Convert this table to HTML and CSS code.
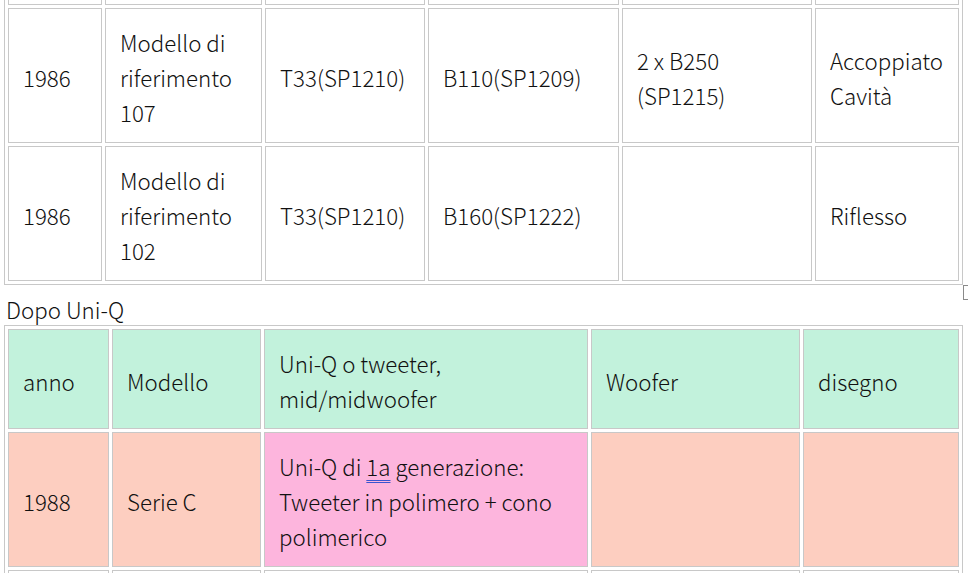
FILE: index.html
```html
<!DOCTYPE html>
<html lang="it">
<head>
<meta charset="utf-8">
<title>Uni-Q</title>
<link rel="stylesheet" href="styles.css">
</head>
<body>
<div class="page">
  <table class="grid grid-before">
    <colgroup>
      <col class="b1"><col class="b2"><col class="b3"><col class="b4"><col class="b5"><col class="b6">
    </colgroup>
    <tr class="row-head">
      <td>anno</td><td>Modello</td><td>Tweeter</td><td>Midrange / Woofer</td><td>Radiatore</td><td>disegno</td>
    </tr>
    <tr>
      <td>1986</td>
      <td>Modello di riferimento 107</td>
      <td>T33(SP1210)</td>
      <td>B110(SP1209)</td>
      <td>2 x B250<br>(SP1215)</td>
      <td>Accoppiato Cavità</td>
    </tr>
    <tr>
      <td>1986</td>
      <td>Modello di riferimento 102</td>
      <td>T33(SP1210)</td>
      <td>B160(SP1222)</td>
      <td></td>
      <td>Riflesso</td>
    </tr>
  </table>
  <div class="caption-line">Dopo Uni-Q</div>
  <table class="grid grid-after">
    <colgroup>
      <col class="a1"><col class="a2"><col class="a3"><col class="a4"><col class="a5">
    </colgroup>
    <tr class="row-green">
      <td>anno</td>
      <td>Modello</td>
      <td>Uni-Q o tweeter, mid/midwoofer</td>
      <td>Woofer</td>
      <td>disegno</td>
    </tr>
    <tr class="row-peach">
      <td>1988</td>
      <td>Serie C</td>
      <td class="pink">Uni-Q di <span class="mark">1a</span> generazione: Tweeter in polimero + cono polimerico</td>
      <td></td>
      <td></td>
    </tr>
    <tr>
      <td>1989</td>
      <td>Serie Q</td>
      <td>Uni-Q di 1a generazione</td>
      <td></td>
      <td></td>
    </tr>
  </table>
  <div class="handle"></div>
</div>
</body>
</html>
```
FILE: styles.css
```css
html, body {
  margin: 0;
  padding: 0;
  background: #ffffff;
}
body {
  font-family: "Noto Sans CJK KR", "Noto Sans", sans-serif;
  font-size: 22.3px;
  font-weight: 300;
  line-height: 35px;
  color: #111111;
  overflow: hidden;
}
.page {
  display: flow-root;
  position: relative;
  padding-left: 4px;
  width: 959px;
}
.grid {
  border: 1px solid #c8c8c8;
  border-spacing: 3px;
  table-layout: fixed;
  width: 959px;
  box-sizing: border-box;
}
.grid td {
  border: 1px solid #c8c8c8;
  padding: 16px 2px 12px 14px;
  vertical-align: middle;
  text-align: left;
}
.grid-before {
  margin-top: -99px;
}
.row-head td {
  height: 70px;
  box-sizing: content-box;
}
.b1 { width: 94px; }
.b2 { width: 157px; }
.b3 { width: 160px; }
.b4 { width: 191px; }
.b5 { width: 190px; }
.b6 { width: 144px; }
.a1 { width: 101px; }
.a2 { width: 149px; }
.a3 { width: 324px; }
.a4 { width: 209px; }
.a5 { width: 156px; }
.caption-line {
  height: 40px;
  line-height: 40px;
  padding-left: 2px;
  padding-top: 4px;
  box-sizing: border-box;
}
.row-green td {
  background: #c2f2dc;
}
.row-peach td {
  background: #fdcec0;
}
.row-peach td.pink {
  background: #fdb5dd;
}
.mark {
  text-decoration: underline double #3a55d0;
  text-decoration-thickness: 1px;
  text-underline-offset: 4px;
}
.handle {
  position: absolute;
  left: 963px;
  top: 285px;
  width: 12px;
  height: 13px;
  border: 1px solid #8a8a8a;
}
```
